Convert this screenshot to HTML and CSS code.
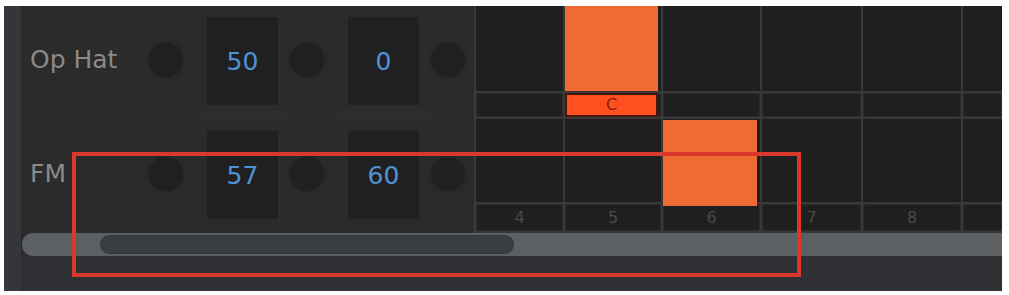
FILE: index.html
```html
<!DOCTYPE html>
<html>
<head>
<meta charset="utf-8">
<link rel="stylesheet" href="styles.css">
</head>
<body>
<div class="frame">
  <div class="strip"></div>
  <div class="content">
    <div class="top">
      <div class="tracks">
        <div class="track">
          <div class="label">Op Hat</div>
          <div class="knob k1"></div>
          <div class="valcol"><div class="val">50</div><div class="ghost"></div></div>
          <div class="knob k2"></div>
          <div class="valcol"><div class="val">0</div><div class="ghost"></div></div>
          <div class="knob k2"></div>
        </div>
        <div class="track">
          <div class="label">FM</div>
          <div class="knob k1"></div>
          <div class="valcol"><div class="val">57</div></div>
          <div class="knob k2"></div>
          <div class="valcol"><div class="val">60</div></div>
          <div class="knob k2"></div>
        </div>
      </div>
      <div class="grid">
        <div class="cell"></div>
        <div class="cell"><div class="note"></div></div>
        <div class="cell"></div>
        <div class="cell"></div>
        <div class="cell"></div>
        <div class="cell"></div>

        <div class="lab"></div>
        <div class="lab on"><div class="chip">C</div></div>
        <div class="lab"></div>
        <div class="lab"></div>
        <div class="lab"></div>
        <div class="lab"></div>

        <div class="cell"></div>
        <div class="cell"></div>
        <div class="cell"><div class="note n2"></div></div>
        <div class="cell"></div>
        <div class="cell"></div>
        <div class="cell"></div>

        <div class="num">4</div>
        <div class="num">5</div>
        <div class="num">6</div>
        <div class="num">7</div>
        <div class="num">8</div>
        <div class="num"></div>
      </div>
    </div>
    <div class="scroll">
      <div class="thumb"></div>
    </div>
    <div class="bottom"></div>
  </div>
  <div class="annot"></div>
</div>
</body>
</html>
```

FILE: styles.css
```css
html, body {
  margin: 0;
  padding: 0;
  background: #ffffff;
}
.frame {
  position: relative;
  margin: 6px 0 0 4px;
  width: 998px;
  height: 285px;
  display: flex;
  background: #2b2b2b;
  font-family: "DejaVu Sans", "Liberation Sans", sans-serif;
}
.strip {
  width: 17px;
  background: #353639;
  flex: none;
}
.content {
  flex: 1;
  display: flex;
  flex-direction: column;
}
.top {
  height: 227px;
  display: flex;
}
.tracks {
  width: 453px;
  border-right: 2px solid #3a3a3a;
  display: flex;
  flex-direction: column;
}
.track {
  height: 114px;
  display: flex;
  align-items: flex-start;
}
.track + .track {
  height: 113px;
}
.label {
  width: 119px;
  padding-left: 9px;
  margin-top: 36px;
  font-size: 25px;
  color: #8a8a8a;
  line-height: 36px;
}
.knob {
  width: 34px;
  height: 34px;
  border-radius: 50%;
  background: #202020;
  box-shadow: 0 0 3px 1px #252525;
  margin-top: 37px;
  flex: none;
}
.knob.k2 {
  margin-left: 12px;
}
.valcol {
  margin-left: 24px;
  margin-top: 11px;
  width: 71px;
  display: flex;
  flex-direction: column;
  align-items: center;
}
.val {
  width: 71px;
  height: 88px;
  background: #202020;
  color: #4d93d6;
  font-size: 25px;
  display: flex;
  align-items: center;
  justify-content: center;
}
.ghost {
  margin-top: 6px;
  width: 96px;
  height: 14px;
  border-radius: 6px;
  background: #2d2d2d;
}
.grid {
  flex: 1;
  display: grid;
  grid-template-columns: 87px 96px 97px 99px 98px 1fr;
  grid-template-rows: 85px 24px 83px 27px;
  column-gap: 2px;
  row-gap: 2px;
  background: #383838;
  align-content: start;
  height: 227px;
  padding-bottom: 2px;
  box-sizing: border-box;
}
.cell {
  background: #1f1f1f;
  position: relative;
}
.note {
  position: absolute;
  left: 0;
  top: 0;
  width: 93px;
  height: 85px;
  background: #f06a34;
}
.note.n2 {
  width: 94px;
  height: 86px;
  top: 1px;
}
.lab, .num {
  background: #1f1f1f;
  box-shadow: inset 0 0 0 1px #2c2c2c;
  border-radius: 3px;
}
.chip {
  background: #ff501f;
  border: 2px solid #4a1606;
  border-radius: 2px;
  box-sizing: border-box;
  width: 93px;
  height: 24px;
  color: #8a1b08;
  font-size: 16px;
  text-align: center;
  line-height: 20px;
}
.num {
  color: #4a4a4a;
  font-size: 16px;
  display: flex;
  align-items: center;
  justify-content: center;
}
.scroll {
  height: 23px;
  background: #5d6063;
  border-radius: 11px 0 0 11px;
  margin-left: 1px;
  display: flex;
  align-items: center;
}
.thumb {
  margin-left: 79px;
  width: 412px;
  height: 17px;
  border-radius: 9px;
  background: #3b3e41;
  box-shadow: 0 0 0 1px #34373a;
}
.bottom {
  flex: 1;
  background: #2e3033;
}
.annot {
  position: absolute;
  left: 68px;
  top: 146px;
  width: 729px;
  height: 125px;
  border: 4px solid #d8392b;
  box-sizing: border-box;
  pointer-events: none;
}
```
